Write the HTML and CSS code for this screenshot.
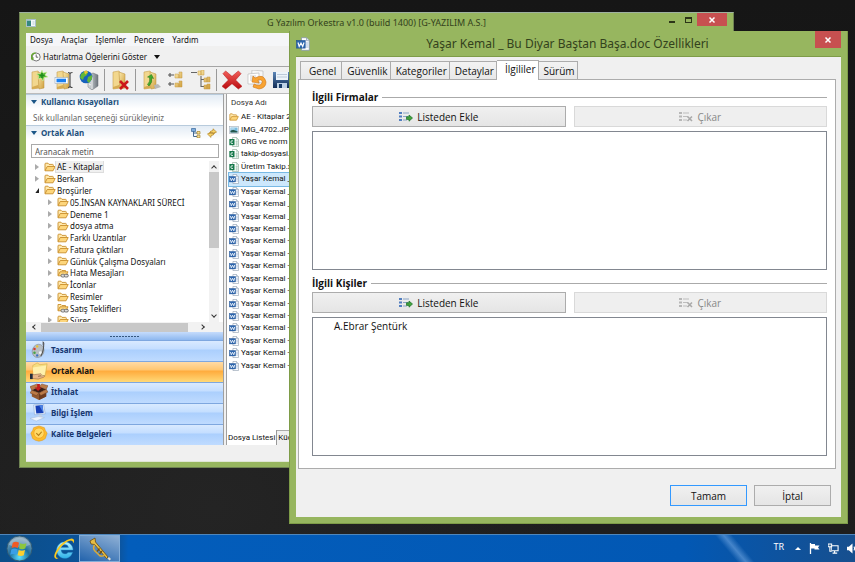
FILE: index.html
```html
<!DOCTYPE html>
<html lang="tr">
<head>
<meta charset="utf-8">
<title>G Yazılım Orkestra</title>
<link rel="stylesheet" href="styles.css">
</head>
<body>
<svg class="sprite" aria-hidden="true">
  <defs>
    <linearGradient id="gold" x1="0" y1="0" x2="1" y2="1"><stop offset="0" stop-color="#fbe9ac"/><stop offset="1" stop-color="#cf9f3c"/></linearGradient>
    <linearGradient id="steel" x1="0" y1="0" x2="1" y2="0"><stop offset="0" stop-color="#dfe3e6"/><stop offset="1" stop-color="#6d757c"/></linearGradient>
    <linearGradient id="red" x1="0" y1="0" x2="0" y2="1"><stop offset="0" stop-color="#f2605a"/><stop offset="1" stop-color="#b90b10"/></linearGradient>
    <linearGradient id="navy" x1="0" y1="0" x2="0" y2="1"><stop offset="0" stop-color="#5d87b8"/><stop offset="1" stop-color="#112c55"/></linearGradient>
    <radialGradient id="orb" cx=".5" cy=".85" r=".8"><stop offset="0" stop-color="#5be0ff"/><stop offset=".5" stop-color="#1c6e9e"/><stop offset="1" stop-color="#8aa9bd"/></radialGradient>
    <linearGradient id="sky" x1="0" y1="0" x2="0" y2="1"><stop offset="0" stop-color="#b5f1ff"/><stop offset="1" stop-color="#2fb2e8"/></linearGradient>

    <symbol id="i-folder" viewBox="0 0 12 10"><path d="M1 8.5V2q0-.8.8-.8H4l1 1.2h3.600q.7 0 .7.8v1" fill="#ffe9ae" stroke="#c98f2b" stroke-width=".9"/><path d="M1 8.800 3.200 4.500h8L9 8.800z" fill="#fdd67c" stroke="#c98f2b" stroke-width=".9" stroke-linejoin="round"/></symbol>
    <symbol id="i-folderlink" viewBox="0 0 12 10"><path d="M1 7.500V1.500h3l1 1h3.500v1.500" fill="#ffe9ae" stroke="#c98f2b" stroke-width=".9"/><path d="M1 7.800 3 3.800h8L9 7.800z" fill="#fdd67c" stroke="#c98f2b" stroke-width=".9"/><rect x="4" y="6.300" width="4" height="2.700" rx="1.300" fill="#ddd" stroke="#666" stroke-width=".9"/><rect x="7.300" y="6.300" width="4" height="2.700" rx="1.300" fill="#ddd" stroke="#666" stroke-width=".9"/></symbol>
    <symbol id="i-word" viewBox="0 0 14 14"><path d="M5.500.7h5l2.800 2.800v9.800H5.500z" fill="#fff" stroke="#8797ab" stroke-width=".8"/><path d="M10.500.7v3h2.800" fill="#dce5ef" stroke="#8797ab" stroke-width=".7"/><path d="M10 6h2.500M10 8h2.500M10 10h2.500" stroke="#7fa1cf" stroke-width=".7"/><rect x=".6" y="3.500" width="8.600" height="7.600" fill="#2d66ae" stroke="#1d4f93" stroke-width=".6"/><path d="m2 5.500 1.200 4L5 6l1.700 3.500L8 5.500" fill="none" stroke="#fff" stroke-width="1.200"/></symbol>
    <symbol id="i-excel" viewBox="0 0 14 14"><path d="M5 .7h5.500l2.800 2.800v9.800H5z" fill="#fff" stroke="#7d9c8a" stroke-width=".8"/><path d="M10.500.7v3h2.800M9 6h3.500M9 8.500h3.500M9 11h3.500M10.800 5v7" fill="none" stroke="#86b79a" stroke-width=".7"/><rect x=".5" y="2.800" width="7.200" height="8.700" fill="#16794a"/><path d="M5.600 5.400q-3-1-3 1.800t3 1.800" fill="none" stroke="#fff" stroke-width="1.200"/></symbol>
    <symbol id="i-image" viewBox="0 0 14 12"><rect x=".6" y="1" width="12.800" height="10" fill="#fff" stroke="#9aa7b2" stroke-width=".8"/><path d="M2 2.500h10v7H2z" fill="#78bbe0"/><path d="M2 9.500V7l4-1.500L12 8v1.500z" fill="#24584c"/><path d="M3 4.500h5" stroke="#fff"/></symbol>
    <symbol id="i-app" viewBox="0 0 10 8"><rect x=".5" y=".5" width="9" height="7" fill="#f3f8fa" stroke="#aabfca"/><path d="M1 1.500h4V7H1z" fill="#36887f"/><path d="M6.500 3h2M6.500 5h2" stroke="#b7cbd4"/></symbol>
    <symbol id="i-clock" viewBox="0 0 10 10"><circle cx="5.200" cy="5" r="4" fill="#fff" stroke="#555" stroke-width=".8"/><path d="M5.200 2.500V5.200h2" fill="none" stroke="#444" stroke-width=".8"/><path d="M1.800 8A4 4 0 0 1 4.600.9" fill="none" stroke="#67a931" stroke-width="1.500"/><path d="M0 5.500h3L1.500 8z" fill="#67a931"/></symbol>

    <symbol id="i-binder" viewBox="0 0 20 20"><path d="m3 2 6-1 1 2v15l-7 1z" fill="#f2d78e" stroke="#c7a04d" stroke-width=".6"/><path d="m9 2 6 2v14l-5 1z" fill="url(#gold)" stroke="#b98d38" stroke-width=".5"/><path d="m3 17 6-2 1 3-7 1z" fill="#d6ab52"/></symbol>
    <symbol id="i-newfolder" viewBox="0 0 20 20"><use href="#i-binder"/><path d="m13 0 1 3 4-1-2 3 3 2-4 .5-1 3.500-2-3-3 1 1-3-2.500-2 4-.5z" fill="#54b834" stroke="#daf3a2" stroke-width=".6"/><path d="M13 3v5M10.500 5.500h5" stroke="#1f8b1c" stroke-width="1.500"/></symbol>
    <symbol id="i-rename" viewBox="0 0 20 20"><use href="#i-binder"/><rect x="1" y="7.500" width="13" height="6" fill="#fff" stroke="#9ab" stroke-width=".6"/><rect x="2.500" y="8.700" width="9.500" height="3.600" fill="#197ff2"/><path d="M14 2.500q2 0 2 1.500v12q0 1.500-2 1.500M18.500 2.500q-2.500 0-2.500 1.500v12q0 1.500 2.500 1.500" fill="none" stroke="#444" stroke-width="1.100"/></symbol>
    <symbol id="i-server" viewBox="0 0 20 20"><path d="m9 5 5-2 5 2v11l-6 4-4-3z" fill="url(#steel)" stroke="#6c7378" stroke-width=".5"/><path d="M13 7v12M10 8l2 1M10 11l2 1M10 14l2 1" stroke="#fff" stroke-width=".8"/><circle cx="7" cy="7" r="6.300" fill="#1762bc"/><path d="m2 4 4-3 3 1-1 3-3 2-1 3-3-2zM9 7l4-2v4l-3 4-2-2z" fill="#61b63a"/><path d="m5 1 3-.5 1 2-3 2z" fill="#eac52f"/></symbol>
    <symbol id="i-delfolder" viewBox="0 0 20 20"><use href="#i-binder"/><path d="m10 11 8 8m0-8-8 8" stroke="#cc161b" stroke-width="2.600"/></symbol>
    <symbol id="i-movefolder" viewBox="0 0 20 20"><use href="#i-binder"/><path d="m13 15 4-1 3 3-6 2z" fill="#b7b7b7"/><path d="M8 16q4-4 2.500-8l2 .5-2-4-4 2.500 2 .5q1 4-2 7z" fill="#42a82d" stroke="#1e7b17" stroke-width=".5"/></symbol>
    <symbol id="i-branch" viewBox="0 0 20 20"><path d="M2 5h6m-4-2v4M2 14h6m-4-2v4" stroke="#555" stroke-width="1.100"/><path d="M9 4h3l1 1v3H9zM13 2h3v6h-3zM9 13h3l1 1v3H9zM13 11h3v6h-3z" fill="url(#gold)" stroke="#c69b44" stroke-width=".5"/></symbol>
    <symbol id="i-tree" viewBox="0 0 20 20"><path d="M0 2.500h6M10 6v10.500h3M10 9.500h3" fill="none" stroke="#666" stroke-width="1.100"/><path d="M7 1h3v4H7zM10 0h3v5h-3zM13 8h3v4h-3zM16 7h3v5h-3zM13 15h3v4h-3zM16 14h3v5h-3z" fill="url(#gold)" stroke="#c69b44" stroke-width=".5"/></symbol>
    <symbol id="i-cross" viewBox="0 0 22 20"><path d="m4 0 7 6 7-6 3 3-6 7 7 7-4 3-7-6-7 6-4-3 7-7-6-7z" fill="url(#red)" stroke="#b10e10" stroke-width=".5"/></symbol>
    <symbol id="i-restore" viewBox="0 0 20 20"><path d="m5 0 11 1v12l-12-1z" fill="#f7f7f7" stroke="#bbb" stroke-width=".7"/><path d="m1 4 11-1v11H1z" fill="#fff" stroke="#bbb" stroke-width=".7"/><path d="M3 6h6M3 8h6M3 10h4" stroke="#ccc"/><path d="M8 8q9-5 11 4 0 6-7 7l-6-2 1-3q6 3 8-1 1-4-4-3l1 3-7-1 1-6z" fill="#f8a332" stroke="#cf7414" stroke-width=".6"/></symbol>
    <symbol id="i-save" viewBox="0 0 20 20"><path d="M1 2h17l2 2v14H1z" fill="url(#navy)"/><path d="M4 2h12v8H4z" fill="#edf4fa"/><path d="M5 4.500h10M5 7h10" stroke="#bccada"/><path d="M5 13h10v5H5z" fill="#bed1e4"/><path d="M7 14h3v4H7z" fill="#183b68"/></symbol>

    <symbol id="i-hier" viewBox="0 0 10 10"><path d="M2.500 3v5.500H6M2.500 5H6" fill="none" stroke="#456a93"/><path d="M.5.500h4v3h-4z" fill="#7faddd" stroke="#38679b" stroke-width=".7"/><path d="M6 3.500h3v2.500H6zM6 7.200h3v2.500H6z" fill="#f9df94" stroke="#a5842e" stroke-width=".7"/></symbol>
    <symbol id="i-sync" viewBox="0 0 10 10"><path d="M9.500 4 6 .8v1.700q-3 0-3.500 3Q4 4.300 6 4.500V6zM.5 6 4 9.400V7.600q3 0 3.500-3Q6 6 4 5.700V4z" fill="#f9d66b" stroke="#b28426" stroke-width=".7"/></symbol>

    <symbol id="i-palette" viewBox="0 0 20 20"><ellipse cx="9" cy="11" rx="6.500" ry="7.500" fill="#b8bec3" stroke="#858d94" stroke-width=".6" transform="rotate(20 9 11)"/><circle cx="11.500" cy="13" r="1.600" fill="#eef3fa"/><circle cx="5" cy="9" r="1.400" fill="#d33c2f"/><circle cx="8" cy="6" r="1.300" fill="#e9c42c"/><circle cx="5" cy="13" r="1.400" fill="#48a346"/><circle cx="8" cy="16" r="1.300" fill="#3970c7"/><path d="M15 1q1 9-3 16" fill="none" stroke="#50504f" stroke-width="1.200"/><path d="m14 0 2 3-1 3-1-2z" fill="#5e6063"/></symbol>
    <symbol id="i-share" viewBox="0 0 20 20"><path d="m3 4 5-3 3 2 8-1-2 13-13 1z" fill="#f5dc80" stroke="#d0ab45" stroke-width=".6"/><path d="m3 6 15-2-2 11-12 1z" fill="#fff0ac"/><path d="M1 14h4l7-1q2 1 0 2l-3 1 7-1q1 1-1 2l-6 2-8-1z" fill="#e8b588" stroke="#7b553c" stroke-width=".5"/><path d="M0 13h3v6H0z" fill="#222d3b"/></symbol>
    <symbol id="i-box" viewBox="0 0 20 20"><path d="m2 8 8 3 8-4v8l-8 4-8-4z" fill="#925931"/><path d="m10 11 8-4v8l-8 4z" fill="#6e3b1f"/><path d="m2 8 8-4 8 3-8 4z" fill="#3b1f15"/><path d="M2 8 0 4l8-3 2 3zM18 7l2-4-7-2-3 3zM2 8l-2 3 7 3 3-3zM18 7l2 3-8 4-2-3z" fill="#bb7b48" stroke="#6b3c22" stroke-width=".5"/><path d="M8 1h3v4h2l-4 4-4-4h3z" fill="#c51d1e"/></symbol>
    <symbol id="i-monitor" viewBox="0 0 20 20"><path d="m4 1 11-1 2 11-12 1z" fill="#e4eefb" stroke="#8ba8ce" stroke-width=".6"/><path d="m6 2 8-1 1 9-8 .5z" fill="#173fb5"/><path d="m10 1.500 4-.5 1 9z" fill="#4c83e5"/><path d="M10 12h3l1 4H9z" fill="#c4d1e2"/><path d="m0 16 9-2 7 1-9 4z" fill="#edf4fd" stroke="#a6bcd9" stroke-width=".6"/></symbol>
    <symbol id="i-badge" viewBox="0 0 20 20"><path d="m10 1 3 1 3 1 1 3 2 3-1 3-1 3-3 2-4 1-4-1-3-2-1-3-1-3 2-3 1-3 3-1z" fill="#fbbd2e" stroke="#e39517" stroke-width=".6"/><circle cx="10" cy="9" r="5.800" fill="#ffd965" stroke="#f7a623"/><path d="m7 9 2.500 2.500L13 7.500" fill="none" stroke="#b57d15" stroke-width="1.200"/></symbol>

    <symbol id="i-add" viewBox="0 0 14 11"><path d="M0 1h3v2H0zM0 4.500h3v2H0zM0 8h3v2H0z" fill="#537fc0"/><path d="M4 2h6M4 5.500h5M4 9h4" stroke="#8aa4c5"/><path d="M7.500 5.800H10V4l3.500 3L10 10.200V8.400H7.500z" fill="#43a33c" stroke="#176e26" stroke-width=".7"/></symbol>
    <symbol id="i-remove" viewBox="0 0 14 11"><path d="M0 1h3v2H0zM0 4.500h3v2H0zM0 8h3v2H0z" fill="#b7b7b7"/><path d="M4 2h6M4 5.500h5M4 9h4" stroke="#bdbdbd"/><path d="m8.500 5.500 4.500 4.500m0-4.500L8.500 10" stroke="#aaa" stroke-width="1.600"/></symbol>
    <symbol id="i-x" viewBox="0 0 8 8"><path d="m1.500 1.500 5 5m0-5-5 5" stroke="#fff" stroke-width="1.500"/></symbol>

    <symbol id="i-start" viewBox="0 0 28 28"><circle cx="14" cy="14" r="13" fill="url(#orb)" stroke="#2f5873"/><path d="M3 10a12 12 0 0 1 22 0q-11 6-22 0z" fill="#fff" opacity=".28"/><path d="M7 8q3-2 6.500 0L12.300 13.500q-3-1.700-6.500 0z" fill="#f05a24"/><path d="M14.700 8.500q3 1.500 6.500 0L20 14q-3 1.500-6.500 0z" fill="#8cc63e"/><path d="M5.500 15q3-2 6.500 0l-1.200 5.500q-3-1.700-6.500 0z" fill="#3a9fe6"/><path d="M13.200 15.500q3 1.500 6.500 0L18.500 21q-3 1.500-6.500 0z" fill="#fdcf2f"/></symbol>
    <symbol id="i-ie" viewBox="0 0 22 22"><path d="M18 17.500A8.200 8.200 0 1 1 20 12H8q.5 4 4 4 2 0 3-1.500h4.500zM8 9.500h7.500q-.5-3-3.700-3T8 9.500z" fill="url(#sky)" stroke="#2c9ad6" stroke-width=".4" fill-rule="evenodd"/><path d="M3.500 21q-4-1-1-7Q6.500 6 14 2q6-3 7 0 .3 1.500-.8 3.500.2-3-2.200-3-4 0-9.500 6-5 6-5.500 9.500-.1 2 2.500 2z" fill="#fbc81e"/></symbol>
    <symbol id="i-trumpet" viewBox="0 0 24 24"><path d="m2 4 5-3 .5 4L20 20l-1.500 1.500L6.500 7.500 3 7z" fill="#e7bd43" stroke="#6b4b10" stroke-width=".8"/><path d="M6.500 8q-2 3 0 5.500l5 5q3 1.500 5-.5" fill="none" stroke="#e0ad32" stroke-width="1.400"/><path d="m9 14.500 2.500-3m0 5.500 2.500-3" stroke="#76500f" stroke-width="1.300"/><path d="m19.500 21.500 1.500-1.500 2 2-1.500 1.500z" fill="#e6dfc9"/></symbol>
    <symbol id="i-flag" viewBox="0 0 11 11"><path d="M1.500 0v11" stroke="#fff" stroke-width="1.300"/><path d="M2 1h4v1.500h4.500L9 4.500l1.500 2H5.500V5.500H2z" fill="#fff"/></symbol>
    <symbol id="i-net" viewBox="0 0 12 12"><path d="M3.500 3h7.500v5.500H3.500zM5 11h5M7.200 8.500V11" fill="none" stroke="#fff" stroke-width="1.200"/><path d="M0 1h4v3H0zM2 4v5h2" fill="#3d6d9d" stroke="#fff" stroke-width="1.100"/></symbol>
    <symbol id="i-sound" viewBox="0 0 12 12"><path d="M0 4h2l4-3.500v11L2 8H0z" fill="#fff"/><path d="M7.500 4q1.500 2 0 4M9.500 2.500q3 3.500 0 7" fill="none" stroke="#fff" stroke-width="1.100"/></symbol>
  </defs>
</svg>

<main class="desktop">
  <section class="window app" aria-label="Orkestra">
    <header class="app-title">
      <svg class="app-logo"><use href="#i-app"/></svg>
      <h1>G Yazılım Orkestra v1.0 (build 1400) [G-YAZILIM A.S.]</h1>
      <div class="controls">
        <button class="ctl" aria-label="Simge durumuna küçült"><i class="min"></i></button>
        <button class="ctl" aria-label="Ekranı kapla"><i class="max"></i></button>
        <button class="close" aria-label="Pencereyi kapat"><svg><use href="#i-x"/></svg></button>
      </div>
    </header>
    <div class="app-body">
      <nav class="menubar"><button>Dosya</button><button>Araçlar</button><button>İşlemler</button><button>Pencere</button><button>Yardım</button></nav>
      <div class="reminder"><button><svg><use href="#i-clock"/></svg>Hatırlatma Öğelerini Göster<i class="down"></i></button></div>
      <div class="toolbar">
        <button aria-label="Yeni"><svg><use href="#i-newfolder"/></svg></button>
        <button aria-label="Adlandır"><svg><use href="#i-rename"/></svg></button>
        <button aria-label="Sunucu"><svg><use href="#i-server"/></svg></button>
        <i class="sep"></i>
        <button aria-label="Klasörü sil"><svg><use href="#i-delfolder"/></svg></button>
        <i class="sep"></i>
        <button aria-label="Taşı"><svg><use href="#i-movefolder"/></svg></button>
        <button aria-label="Daralt"><svg><use href="#i-branch"/></svg></button>
        <button aria-label="Genişlet"><svg><use href="#i-tree"/></svg></button>
        <i class="sep"></i>
        <button aria-label="Sil"><svg><use href="#i-cross"/></svg></button>
        <button aria-label="Geri al"><svg><use href="#i-restore"/></svg></button>
        <button aria-label="Kaydet"><svg><use href="#i-save"/></svg></button>
      </div>
      <div class="workspace">
        <aside class="sidebar">
          <h2 class="section"><i class="down"></i>Kullanıcı Kısayolları</h2>
          <p class="hint">Sık kullanılan seçeneği sürükleyiniz</p>
          <h2 class="section"><i class="down"></i>Ortak Alan<span class="tools"><svg><use href="#i-hier"/></svg><svg><use href="#i-sync"/></svg></span></h2>
          <input class="search" type="text" placeholder="Aranacak metin" aria-label="Aranacak metin">
          <div class="tree-area">
            <ul class="tree">
              <li><i class="tw"></i><svg><use href="#i-folder"/></svg><span class="picked">AE - Kitaplar</span></li>
              <li><i class="tw"></i><svg><use href="#i-folder"/></svg><span>Berkan</span></li>
              <li><i class="tw open"></i><svg><use href="#i-folder"/></svg><span>Broşürler</span></li>
              <li class="sub"><i class="tw"></i><svg><use href="#i-folder"/></svg><span>05.İNSAN KAYNAKLARI SÜRECİ</span></li>
              <li class="sub"><i class="tw"></i><svg><use href="#i-folder"/></svg><span>Deneme 1</span></li>
              <li class="sub"><i class="tw"></i><svg><use href="#i-folder"/></svg><span>dosya atma</span></li>
              <li class="sub"><i class="tw"></i><svg><use href="#i-folder"/></svg><span>Farklı Uzantılar</span></li>
              <li class="sub"><i class="tw"></i><svg><use href="#i-folder"/></svg><span>Fatura çıktıları</span></li>
              <li class="sub"><i class="tw"></i><svg><use href="#i-folder"/></svg><span>Günlük Çalışma Dosyaları</span></li>
              <li class="sub"><i class="tw"></i><svg><use href="#i-folderlink"/></svg><span>Hata Mesajları</span></li>
              <li class="sub"><i class="tw"></i><svg><use href="#i-folder"/></svg><span>İconlar</span></li>
              <li class="sub"><i class="tw"></i><svg><use href="#i-folder"/></svg><span>Resimler</span></li>
              <li class="sub"><i class="tw none"></i><svg><use href="#i-folderlink"/></svg><span>Satış Teklifleri</span></li>
              <li class="sub"><i class="tw"></i><svg><use href="#i-folder"/></svg><span>Süreç</span></li>
            </ul>
            <div class="vscroll"><i class="chev up"></i><i class="thumb"></i><i class="chev dn"></i></div>
          </div>
          <div class="hscroll"><i class="chev lt"></i><i class="thumb"></i><i class="chev rt"></i></div>
          <div class="splitter"><i></i></div>
          <nav class="modules">
            <button><svg><use href="#i-palette"/></svg>Tasarım</button>
            <button class="current"><svg><use href="#i-share"/></svg>Ortak Alan</button>
            <button><svg><use href="#i-box"/></svg>İthalat</button>
            <button><svg><use href="#i-monitor"/></svg>Bilgi İşlem</button>
            <button><svg><use href="#i-badge"/></svg>Kalite Belgeleri</button>
          </nav>
        </aside>
        <section class="files">
          <h2>Dosya Adı</h2>
          <ul class="filelist">
            <li><svg><use href="#i-folder"/></svg>AE - Kitaplar 2</li>
            <li><svg><use href="#i-image"/></svg>IMG_4702.JPG</li>
            <li><svg><use href="#i-excel"/></svg>ORG ve norm</li>
            <li><svg><use href="#i-excel"/></svg>takip-dosyasi.</li>
            <li><svg><use href="#i-excel"/></svg>Üretim Takip.x</li>
            <li class="selected"><svg><use href="#i-word"/></svg>Yaşar Kemal _</li>
            <li><svg><use href="#i-word"/></svg>Yaşar Kemal _</li>
            <li><svg><use href="#i-word"/></svg>Yaşar Kemal _</li>
            <li><svg><use href="#i-word"/></svg>Yaşar Kemal _</li>
            <li><svg><use href="#i-word"/></svg>Yaşar Kemal -</li>
            <li><svg><use href="#i-word"/></svg>Yaşar Kemal -</li>
            <li><svg><use href="#i-word"/></svg>Yaşar Kemal -</li>
            <li><svg><use href="#i-word"/></svg>Yaşar Kemal -</li>
            <li><svg><use href="#i-word"/></svg>Yaşar Kemal -</li>
            <li><svg><use href="#i-word"/></svg>Yaşar Kemal -</li>
            <li><svg><use href="#i-word"/></svg>Yaşar Kemal -</li>
            <li><svg><use href="#i-word"/></svg>Yaşar Kemal -</li>
            <li><svg><use href="#i-word"/></svg>Yaşar Kemal -</li>
            <li><svg><use href="#i-word"/></svg>Yaşar Kemal -</li>
            <li><svg><use href="#i-word"/></svg>Yaşar Kemal -</li>
            <li><svg><use href="#i-word"/></svg>Yaşar Kemal -</li>
          </ul>
          <div class="viewtabs"><button class="current">Dosya Listesi</button><button>Küç</button></div>
        </section>
      </div>
      <footer class="status"></footer>
    </div>
  </section>

  <section class="window dialog" role="dialog" aria-labelledby="dialog-title">
    <header class="dialog-title">
      <svg class="dialog-logo"><use href="#i-word"/></svg>
      <h1 id="dialog-title">Yaşar Kemal _ Bu Diyar Baştan Başa.doc Özellikleri</h1>
      <button class="close" aria-label="Kapat"><svg><use href="#i-x"/></svg></button>
    </header>
    <div class="dialog-body">
      <div class="tabs" role="tablist">
        <button role="tab">Genel</button><button role="tab">Güvenlik</button><button role="tab">Kategoriler</button><button role="tab">Detaylar</button><button role="tab" class="current" aria-selected="true">İlgililer</button><button role="tab">Sürüm</button>
      </div>
      <div class="pane">
        <section class="group">
          <h2>İlgili Firmalar</h2>
          <div class="actions">
            <button><svg><use href="#i-add"/></svg>Listeden Ekle</button>
            <button disabled><svg><use href="#i-remove"/></svg>Çıkar</button>
          </div>
          <ul class="entries"></ul>
        </section>
        <section class="group">
          <h2>İlgili Kişiler</h2>
          <div class="actions">
            <button><svg><use href="#i-add"/></svg>Listeden Ekle</button>
            <button disabled><svg><use href="#i-remove"/></svg>Çıkar</button>
          </div>
          <ul class="entries"><li>A.Ebrar Şentürk</li></ul>
        </section>
      </div>
      <footer class="answers"><button class="default">Tamam</button><button>İptal</button></footer>
    </div>
  </section>
</main>

<footer class="taskbar">
  <button class="start" aria-label="Başlat"><svg><use href="#i-start"/></svg></button>
  <button class="pin" aria-label="Internet Explorer"><svg><use href="#i-ie"/></svg></button>
  <button class="task" aria-label="Orkestra"><svg><use href="#i-trumpet"/></svg></button>
  <div class="tray"><span>TR</span><i class="upward"></i><svg><use href="#i-flag"/></svg><svg><use href="#i-net"/></svg><svg><use href="#i-sound"/></svg></div>
</footer>
</body>
</html>
```

FILE: styles.css
```css
:root {
  --green: #97b65f;
  --green-edge: #7e9c48;
  --small: 8px;
  --normal: 10px;
}
* { box-sizing: border-box; }
body {
  margin: 0;
  min-height: 100vh;
  display: flex;
  flex-direction: column;
  overflow: hidden;
  background: #1b1b1b;
  color: #111;
  font: var(--small)/12px "Noto Sans", "Open Sans", sans-serif;
}
h1, h2, p, ul { margin: 0; padding: 0; font-weight: 400; font-size: inherit; }
h1 { font-family: "Noto Sans", "Open Sans", sans-serif; }
ul { list-style: none; }
button {
  font: inherit;
  color: inherit;
  border: 0;
  padding: 0;
  background: none;
  display: flex;
  align-items: center;
  justify-content: center;
  white-space: nowrap;
}
svg { flex: none; display: block; }
i { flex: none; display: block; }
.sprite { position: absolute; width: 0; height: 0; }

.desktop {
  flex: 1;
  position: relative;
  background: radial-gradient(ellipse at 25% 95%, #242424, transparent 40%), linear-gradient(#161616, #1e1e1e);
}
.window { position: absolute; display: flex; flex-direction: column; background: var(--green); }
.close { background: #c75050; }
.close svg { width: 8px; height: 8px; }

/* Application window */
.app {
  left: 19px;
  top: 12px;
  width: 715px;
  height: 456px;
  border: 1px solid #6f8352;
  border-top-color: #9fb2a0;
  padding: 0 6px 5px;
}
.app-title { height: 20px; display: flex; align-items: center; color: #33421c; }
.app-logo { width: 10px; height: 8px; }
.app-title h1 { flex: 1; text-align: center; font-size: 9px; padding-left: 54px; }
.controls { display: flex; align-self: flex-start; }
.ctl { width: 17px; height: 14px; }
.min { width: 6px; height: 2px; background: #2c3518; margin-top: 4px; }
.max { width: 7px; height: 6px; border: 1px solid #2c3518; border-top-width: 2px; }
.controls .close { width: 30px; height: 13px; }
.app-body { flex: 1; min-height: 0; display: flex; flex-direction: column; background: #f0f0f0; }
.menubar { height: 13px; display: flex; gap: 8px; padding-left: 4px; background: #f5f6f8; }
.reminder { height: 21px; display: flex; padding: 1px 5px 0; border-bottom: 1px solid #a5a5a5; }
.reminder button { gap: 2px; }
.reminder svg { width: 10px; height: 10px; }
.reminder .down { border-top-color: #111; margin-left: 5px; }
.down { border: 3px solid transparent; border-top: 4px solid #1b5687; border-bottom: 0; }
.toolbar { height: 27px; display: flex; align-items: center; gap: 5px; padding-left: 3px; border-bottom: 1px solid #bbb; }
.toolbar svg { width: 20px; height: 20px; }
.sep { width: 1px; height: 22px; background: #999; }
.workspace { flex: 1; min-height: 0; display: flex; gap: 2px; }
.status { height: 17px; border-bottom: 1px solid #e0e6d5; }

.sidebar { width: 198px; display: flex; flex-direction: column; background: #fff; border-right: 1px solid #a0a0a0; }
.section {
  height: 15px;
  display: flex;
  align-items: center;
  gap: 4px;
  padding: 0 6px 0 5px;
  color: #1b4f7c;
  font-weight: 700;
  border-top: 1px solid #b8cbdc;
  background: linear-gradient(#e3ecf5, #fff);
}
.tools { margin-left: auto; display: flex; gap: 6px; }
.tools svg { width: 10px; height: 10px; }
.hint { height: 16px; padding: 3px 7px 0; color: #666; }
.search {
  height: 14px;
  margin: 4px 4px 3px 5px;
  padding: 0 3px;
  border: 1px solid #aaa;
  font: inherit;
}
.search::placeholder { color: #555; opacity: 1; }
.tree-area { height: 161px; display: flex; overflow: hidden; }
.tree { flex: 1; height: 165px; display: grid; grid-auto-rows: 1fr; padding-left: 9px; }
.tree li { display: flex; align-items: center; min-height: 0; white-space: nowrap; }
.tree .sub { padding-left: 13px; }
.tree svg { width: 12px; height: 10px; }
.tree span { line-height: 11px; padding: 0 1px; }
.tree .picked { background: #f0f0f0; outline: 1px solid #ddd; }
.tw { width: 4px; height: 6px; margin-right: 5px; background: #aaa; clip-path: polygon(0 0, 100% 50%, 0 100%); }
.tw.open { background: #222; clip-path: polygon(100% 10%, 100% 100%, 0 100%); }
.tw.none { background: none; }
.vscroll { width: 10px; margin-right: 4px; display: flex; flex-direction: column; align-items: center; background: #f2f2f2; }
.vscroll .thumb { width: 100%; height: 76px; margin: 2px 0 auto; background: #c8c8c8; }
.chev { width: 4px; height: 4px; border: solid #333; border-width: 1px 0 0 1px; }
.up { transform: rotate(45deg); margin-top: 5px; }
.dn { transform: rotate(225deg); margin-bottom: 5px; }
.lt { transform: rotate(-45deg); }
.rt { transform: rotate(135deg); margin-right: 14px; }
.hscroll { height: 10px; display: flex; align-items: center; gap: 4px; padding: 0 5px 0 7px; background: #f2f2f2; }
.hscroll .thumb { width: 147px; height: 9px; background: #c8c8c8; margin-right: auto; }
.splitter { height: 8px; display: flex; align-items: center; justify-content: center; background: linear-gradient(#c5dcfc, #8eb8ef); }
.splitter i { width: 29px; height: 1px; background: repeating-linear-gradient(90deg, #35577f 0 2px, transparent 2px 3px); }
.modules { flex: 1; display: grid; grid-auto-rows: 1fr; }
.modules button {
  justify-content: flex-start;
  gap: 3px;
  padding: 0 0 2px 4px;
  color: #17366f;
  font-weight: 700;
  border-top: 1px solid #7ea7df;
  background: linear-gradient(#d9eaff 0, #c4deff 40%, #abcffd 45%, #bfdbff 100%);
}
.modules .current { color: #111; background: linear-gradient(#ffdba6 0, #ffc670 40%, #ffab3c 45%, #ffd978 100%); }
.modules svg { width: 18px; height: 18px; }

.files { flex: 1; display: flex; flex-direction: column; background: #fff; border-left: 1px solid #a0a0a0; font-family: Roboto, "Noto Sans", sans-serif; }
.files h2 { height: 17px; padding: 3px 4px 0; color: #333; }
.filelist { height: 261px; display: grid; grid-auto-rows: 1fr; padding-left: 2px; }
.filelist li { display: flex; align-items: center; gap: 2px; min-height: 0; white-space: nowrap; }
.filelist svg { width: 10px; height: 10px; }
.filelist .selected { background: #cde8fc; outline: 1px solid #78b9e4; }
.viewtabs { margin-top: auto; height: 15px; display: flex; background: #f0f0f0; border-top: 1px solid #aaa; }
.viewtabs button { padding: 0 1px; border-right: 1px solid #999; }
.viewtabs .current { background: #fff; margin-top: -1px; }

/* Properties dialog */
.dialog {
  left: 289px;
  top: 31px;
  width: 559px;
  height: 493px;
  padding: 0 6px 6px;
  border: 1px solid var(--green-edge);
  border-top: 0;
  font-family: "Open Sans", "Noto Sans", sans-serif;
  font-size: var(--normal);
  line-height: 14px;
}
.dialog-title { height: 25px; display: flex; align-items: center; color: #33421c; }
.dialog-logo { width: 14px; height: 14px; }
.dialog-title h1 { flex: 1; text-align: center; font-size: 12px; padding-left: 10px; }
.dialog-title .close { width: 26px; height: 17px; align-self: flex-start; }
.dialog-body { flex: 1; display: flex; flex-direction: column; padding: 3px 5px 11px 2px; background: #f0f0f0; border-top: 1px solid var(--green-edge); }
.tabs { height: 19px; display: flex; align-items: flex-end; padding-left: 2px; }
.tabs button { height: 18px; padding: 0 2px 0 5px; border: 1px solid #acacac; border-width: 1px 1px 0 0; background: linear-gradient(#f3f3f3, #e8e8e8); }
.tabs button:first-child { border-left-width: 1px; padding: 0 5px 0 8px; }
.tabs .current { height: 20px; margin-bottom: -1px; padding: 0 2px 3px 8px; background: #fff; position: relative; }
.pane { flex: 1; display: flex; flex-direction: column; gap: 6px; padding: 10px 8px 12px 13px; background: #fff; border: 1px solid #acacac; }
.group { flex: 1; display: flex; flex-direction: column; }
.group h2 { display: flex; align-items: center; gap: 4px; font-weight: 700; }
.group h2::after { content: ""; flex: 1; height: 1px; background: #aaa; }
.actions { display: flex; gap: 8px; margin: 2px 0 4px; }
.actions button, .answers button { height: 21px; border: 1px solid #acacac; background: linear-gradient(#f0f0f0, #e5e5e5); }
.actions button { flex: 1; gap: 4px; }
.actions button:disabled { color: #888; background: #efefef; border-color: #d9d9d9; }
.actions svg { width: 14px; height: 11px; }
.entries { flex: 1; border: 1px solid #828790; padding: 1px 21px; }
.answers { display: flex; justify-content: flex-end; gap: 7px; padding: 16px 5px 0 0; }
.answers button { width: 77px; }
.answers .default { border-color: #3399ff; }

/* Taskbar */
.taskbar {
  height: 28px;
  display: flex;
  align-items: center;
  border-top: 1px solid #4f86bb;
  background:
    linear-gradient(50deg, transparent 84%, rgba(130, 180, 235, .5) 85%, transparent 86%) no-repeat,
    linear-gradient(90deg, #0b4e89, #0c559f 14%, #035dbb 15%, #0258b4 80%, #174f8e);
}
.start { width: 38px; }
.start svg { width: 27px; height: 27px; }
.pin { width: 41px; padding-left: 11px; }
.pin svg { width: 22px; height: 22px; }
.task { width: 41px; height: 27px; border: 1px solid #83add8; background: linear-gradient(20deg, #2263ac, #8fb0d5); }
.task svg { width: 24px; height: 24px; }
.tray { margin-left: auto; display: flex; align-items: center; gap: 8px; color: #fff; white-space: nowrap; margin-right: -3px; }
.tray span { margin-right: 3px; padding-bottom: 4px; font-size: 9px; }
.tray svg { width: 11px; height: 11px; }
.upward { border: 3px solid transparent; border-bottom-color: #fff; border-top: 0; }
```
